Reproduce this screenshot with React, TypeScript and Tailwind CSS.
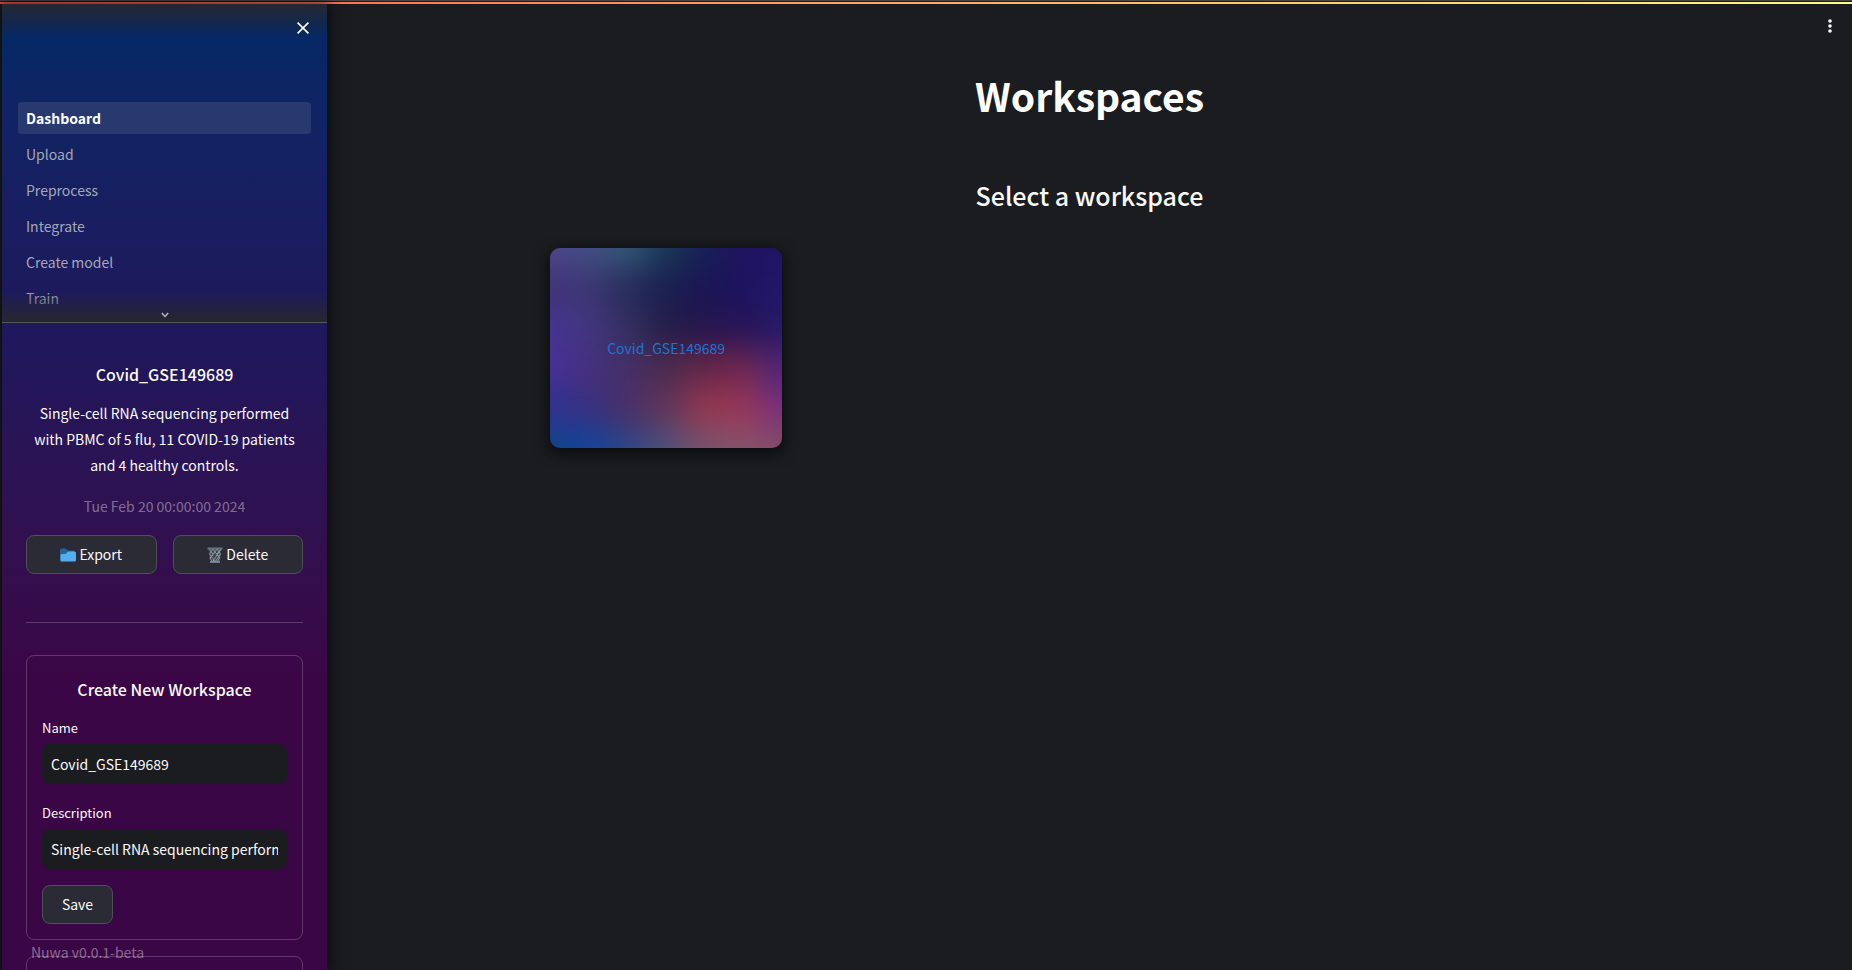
import { useState } from "react";

const pages = ["Dashboard", "Upload", "Preprocess", "Integrate", "Create model", "Train"];

const buttonStyle =
  "flex h-[39px] items-center justify-center gap-[3px] rounded-lg border border-[#4e4f57] bg-[#2b2b36] text-[#fafafa]";
const inputStyle = "h-10 w-full rounded-lg bg-[#1a1c1f] px-[9px] text-[#fafafa] outline-none";

// Colours of the card's soft mesh, row by row.
const mesh = [
  ["#4f458c", "#424d84", "#335775", "#1a3756", "#171f56", "#20135f", "#201460"],
  ["#40327a", "#3c3672", "#272b5c", "#191f50", "#1c1555", "#1c1460", "#21176a"],
  ["#453492", "#42367f", "#34305f", "#241d48", "#24164c", "#261458", "#261a66"],
  ["#46309a", "#46307d", "#442f68", "#4c2a4e", "#652648", "#70264f", "#50257a"],
  ["#2f3090", "#373080", "#4a3068", "#61365a", "#95384f", "#983658", "#763080"],
  ["#114488", "#12449c", "#2c4588", "#50507c", "#78526c", "#87526a", "#854a68"],
];

function CardBackdrop() {
  return (
    <svg className="absolute inset-0 size-full" viewBox="0 0 6 5" preserveAspectRatio="none" aria-hidden="true">
      <filter id="soften" x="-2" y="-2" width="12" height="12" filterUnits="userSpaceOnUse" colorInterpolationFilters="sRGB">
        <feGaussianBlur stdDeviation="0.4" />
      </filter>
      <g filter="url(#soften)">
        {mesh.map((row, r) =>
          row.map((fill, c) => {
            const left = c === 0 ? -2 : c - 0.5;
            const top = r === 0 ? -2 : r - 0.5;
            return <rect key={`${r}-${c}`} x={left} y={top} width={9 - left} height={9 - top} fill={fill} />;
          }),
        )}
      </g>
    </svg>
  );
}

function FolderIcon() {
  return (
    <svg width="16" height="14" viewBox="0 0 16 14" aria-hidden="true">
      <path d="M0 2A1.500 1.500 0 0 1 1.500.500H5.500L8 2.500H13a1.500 1.500 0 0 1 1.500 1.500V12H0z" fill="#226699" />
      <path d="M16 4.500V12a1.500 1.500 0 0 1-1.500 1.500H.500V7.500A1.500 1.500 0 0 1 2 6H5.500L8 3.500H15z" fill="#55acee" />
    </svg>
  );
}

function BinIcon() {
  return (
    <svg width="16" height="16" viewBox="0 0 16 16" fill="none" aria-hidden="true">
      <path d="M1.500 1.500h13l-1.500 13.500h-10z" fill="#3e444a" />
      <path
        d="M2 2l4 5-3 4 2.500 4M6 2L2.500 7l6 8M6 2l6.500 9L10 15M10 2L3 11.500M10 2l3.500 5L8 15M14 2L5.500 15M14 2L10 7l3 4"
        stroke="#8899a6"
      />
      <path d="M.5 1.500h15" stroke="#66757f" strokeWidth="2" />
      <path d="M3 15h10" stroke="#8899a6" strokeWidth="1.500" />
    </svg>
  );
}

function Sidebar() {
  const [name, setName] = useState("Covid_GSE149689");
  const [description, setDescription] = useState(
    "Single-cell RNA sequencing performed with PBMC of 5 flu, 11 COVID-19 patients and 4 healthy controls.",
  );
  return (
    <aside className="relative z-10 ml-0.5 flex h-full w-[325px] shrink-0 flex-col overflow-hidden bg-linear-to-b from-[#002966] via-[#1f175c] via-35% to-[#3b0646] to-70% shadow-[0_0_14px_3px_rgba(0,0,0,0.6)]">
      <div className="relative h-[319px] shrink-0 border-b border-[#55565a]">
        <div className="flex h-[98px] items-start justify-end bg-linear-to-b from-[#262730] to-transparent to-35% pt-[14px] pr-[14px]">
          <button type="button" aria-label="Close sidebar" className="flex size-5 items-center justify-center text-white">
            <svg width="12" height="12" viewBox="0 0 12 12" stroke="currentColor" strokeWidth="1.600" aria-hidden="true">
              <path d="M.6.6l10.800 10.800M11.400.6L.6 11.400" />
            </svg>
          </button>
        </div>
        <nav className="flex flex-col gap-1 px-4">
          {pages.map((page, i) => (
            <a
              key={page}
              href="#"
              className={
                i === 0
                  ? "flex h-8 items-center rounded bg-[#28396f] px-2 font-bold text-white"
                  : "flex h-8 items-center rounded px-2 text-[#a3a8b8]"
              }
            >
              {page}
            </a>
          ))}
        </nav>
        <div className="absolute inset-x-0 bottom-0 flex h-8 items-end justify-center bg-linear-to-b from-transparent to-[#27272e] pb-1">
          <svg width="8" height="6" viewBox="0 0 8 6" fill="none" stroke="#b4b4bb" strokeWidth="1.500" aria-hidden="true">
            <path d="M.8 1L4 4.500 7.200 1" />
          </svg>
        </div>
      </div>

      <div className="flex flex-col px-6 pt-[39px] text-[#fafafa]">
        <h3 className="text-center text-base leading-6 font-medium">Covid_GSE149689</h3>
        <p className="mt-[14px] text-center leading-[26px]">
          Single-cell RNA sequencing performed with PBMC of 5 flu, 11 COVID-19 patients and 4 healthy controls.
        </p>
        <p className="mt-[15px] text-center leading-[26px] text-white/40">Tue Feb 20 00:00:00 2024</p>
        <div className="mt-4 grid grid-cols-2 gap-4">
          <button type="button" className={buttonStyle}>
            <FolderIcon />
            Export
          </button>
          <button type="button" className={buttonStyle}>
            <BinIcon />
            Delete
          </button>
        </div>
        <hr className="mt-12 border-white/20" />
        <form
          className="mt-8 flex flex-col rounded-lg border border-white/20 px-[15px] pt-[21px] pb-[15px]"
          onSubmit={(e) => e.preventDefault()}
        >
          <h3 className="text-center text-base leading-6 font-medium">Create New Workspace</h3>
          <label htmlFor="name" className="mt-[17px] mb-1.5 text-[13px] leading-5">
            Name
          </label>
          <input id="name" className={inputStyle} value={name} onChange={(e) => setName(e.target.value)} />
          <label htmlFor="description" className="mt-[19px] mb-1.5 text-[13px] leading-5">
            Description
          </label>
          <input
            id="description"
            className={inputStyle}
            value={description}
            onChange={(e) => setDescription(e.target.value)}
          />
          <button type="submit" className={`mt-4 w-[71px] ${buttonStyle}`}>
            Save
          </button>
        </form>
        <div className="mt-4 h-40 rounded-lg border border-white/20" />
      </div>
      <footer className="absolute bottom-1.5 left-[29px] leading-6 text-white/40">Nuwa v0.0.1-beta</footer>
    </aside>
  );
}

export default function App() {
  return (
    <div className="flex h-screen flex-col overflow-hidden bg-[#1a1c1f] font-['Noto_Sans_CJK_JP','Source_Sans_Pro',sans-serif] text-[14px]">
      <div className="h-0.5 shrink-0 border-t border-[#47474a]" />
      <div className="h-0.5 shrink-0 bg-linear-to-r from-[#ff4b4b] to-[#fffd80]" />
      <div className="flex min-h-0 grow">
        <Sidebar />
        <main className="relative flex grow flex-col items-center">
          <button type="button" aria-label="Menu" className="absolute top-3 right-3 flex size-5 items-center justify-center text-[#fafafa]">
            <svg width="4" height="14" viewBox="0 0 4 14" fill="currentColor" aria-hidden="true">
              <circle cx="2" cy="2" r="1.800" />
              <circle cx="2" cy="7" r="1.800" />
              <circle cx="2" cy="12" r="1.800" />
            </svg>
          </button>
          <h1 className="mt-[65px] text-[39px] leading-[52px] font-bold text-white">Workspaces</h1>
          <h2 className="mt-14 text-[25px] leading-9 font-medium text-[#fafafa]">Select a workspace</h2>
          <div className="mt-[35px] grid w-full max-w-[1079px] grid-cols-4 gap-[50px]">
            <a
              href="#"
              className="relative flex h-[200px] items-center justify-center overflow-hidden rounded-[10px] text-[#1c75d0] shadow-[0_4px_14px_2px_rgba(0,0,0,0.6)]"
            >
              <CardBackdrop />
              <span className="relative">Covid_GSE149689</span>
            </a>
          </div>
        </main>
      </div>
    </div>
  );
}
